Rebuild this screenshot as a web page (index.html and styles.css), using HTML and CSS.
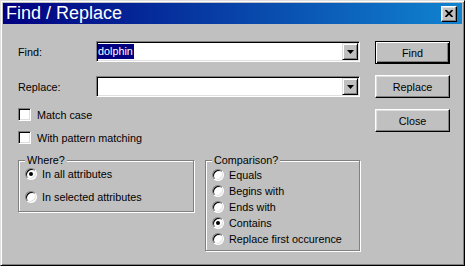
FILE: index.html
```html
<!DOCTYPE html>
<html lang="en">
<head>
    <meta charset="UTF-8">
    <title>Find / Replace</title>
    <link rel="stylesheet" href="styles.css">
</head>
<body>
    <div class="window">
        <div class="titlebar">
            <span class="title">Find / Replace</span>
            <button class="close-btn" aria-label="Close">
                <svg width="8" height="7" viewBox="0 0 8 7"><path d="M0.5 0 L7.5 7 M7.5 0 L0.5 7" stroke="#000" stroke-width="1.8" fill="none"/></svg>
            </button>
        </div>

        <div class="content">
            <div class="form-area">
                <div class="field-row">
                    <span class="field-label">Find:</span>
                    <div class="combo">
                        <div class="combo-text"><span class="selected">dolphin</span></div>
                        <span class="combo-arrow"><svg width="7" height="4" viewBox="0 0 7 4"><path d="M0 0 H7 L3.5 4 Z" fill="#000"/></svg></span>
                    </div>
                </div>
                <div class="field-row second">
                    <span class="field-label">Replace:</span>
                    <div class="combo">
                        <div class="combo-text"></div>
                        <span class="combo-arrow"><svg width="7" height="4" viewBox="0 0 7 4"><path d="M0 0 H7 L3.5 4 Z" fill="#000"/></svg></span>
                    </div>
                </div>

                <div class="check-row first">
                    <span class="checkbox"></span>Match case
                </div>
                <div class="check-row">
                    <span class="checkbox"></span>With pattern matching
                </div>

                <div class="groups">
                    <fieldset class="group where">
                        <legend>Where?</legend>
                        <div class="radio-row"><span class="radio checked"></span>In all attributes</div>
                        <div class="radio-row"><span class="radio"></span>In selected attributes</div>
                    </fieldset>
                    <fieldset class="group comparison">
                        <legend>Comparison?</legend>
                        <div class="radio-row"><span class="radio"></span>Equals</div>
                        <div class="radio-row"><span class="radio"></span>Begins with</div>
                        <div class="radio-row"><span class="radio"></span>Ends with</div>
                        <div class="radio-row"><span class="radio checked"></span>Contains</div>
                        <div class="radio-row"><span class="radio"></span>Replace first occurence</div>
                    </fieldset>
                </div>
            </div>

            <div class="buttons">
                <button class="btn default">Find</button>
                <button class="btn">Replace</button>
                <button class="btn">Close</button>
            </div>
        </div>
    </div>
</body>
</html>
```

FILE: styles.css
```css
body {
    margin: 0;
    padding: 0;
    background-color: #c0c0c0;
    font-family: 'Liberation Sans', Arial, sans-serif;
    font-size: 10.8px;
    color: #000;
}

.window {
    width: 465px;
    height: 266px;
    box-sizing: border-box;
    background-color: #c0c0c0;
    border: 1px solid;
    border-color: #dfdfdf #000 #000 #dfdfdf;
    box-shadow: inset 1px 1px #fff, inset -1px -1px #808080;
    padding: 2px;
    display: flex;
    flex-direction: column;
}

.titlebar {
    height: 21px;
    display: flex;
    align-items: center;
    justify-content: space-between;
    padding: 0 5px 0 3px;
    background: linear-gradient(to right, #000080, #1084d0);
    color: #fff;
}

.title {
    font-size: 18px;
    line-height: 21px;
}

.close-btn {
    width: 16px;
    height: 16px;
    padding: 0 1px 0 0;
    box-sizing: border-box;
    display: flex;
    align-items: center;
    justify-content: center;
    background-color: #c0c0c0;
    border: 1px solid;
    border-color: #fff #000 #000 #fff;
    box-shadow: inset -1px -1px #808080, inset 1px 1px #dfdfdf;
}

.content {
    display: grid;
    grid-template-columns: 342px 75px;
    column-gap: 15px;
    align-items: start;
    padding: 17px 0 0 15px;
}

.form-area {
    display: flex;
    flex-direction: column;
}

.field-row {
    display: flex;
    align-items: center;
    height: 21px;
}

.field-row.second {
    margin-top: 14px;
}

.field-label {
    width: 78px;
}

.combo {
    width: 264px;
    height: 21px;
    box-sizing: border-box;
    display: flex;
    padding: 1px;
    background-color: #fff;
    border: 1px solid;
    border-color: #808080 #fff #fff #808080;
    box-shadow: inset 1px 1px #000, inset -1px -1px #dfdfdf;
}

.combo-text {
    flex: 1;
    display: flex;
    align-items: center;
}

.selected {
    background-color: #000080;
    color: #fff;
    line-height: 15px;
    padding-right: 1px;
}

.combo-arrow {
    width: 16px;
    box-sizing: border-box;
    display: flex;
    align-items: center;
    justify-content: center;
    background-color: #c0c0c0;
    border: 1px solid;
    border-color: #dfdfdf #000 #000 #dfdfdf;
    box-shadow: inset 1px 1px #fff, inset -1px -1px #808080;
}

.check-row {
    display: flex;
    align-items: center;
    gap: 6px;
    height: 13px;
    margin-top: 10px;
}

.check-row.first {
    margin-top: 11px;
}

.checkbox {
    width: 13px;
    height: 13px;
    box-sizing: border-box;
    background-color: #fff;
    border: 1px solid;
    border-color: #808080 #fff #fff #808080;
    box-shadow: inset 1px 1px #000, inset -1px -1px #dfdfdf;
}

.groups {
    display: flex;
    align-items: flex-start;
    gap: 11px;
    margin-top: 10px;
}

.group {
    margin: 0;
    min-width: 0;
    box-sizing: border-box;
    border: 1px solid #808080;
    box-shadow: inset 1px 1px #fff, 1px 1px #fff;
    padding: 0 0 6px 6px;
}

.group legend {
    padding: 0 2px;
    line-height: 12px;
    background-color: #c0c0c0;
}

.where {
    width: 176px;
}

.where .radio-row + .radio-row {
    margin-top: 7px;
}

.comparison {
    width: 155px;
    padding-top: 1px;
    padding-bottom: 3px;
}

.radio-row {
    display: flex;
    align-items: center;
    gap: 5px;
    height: 16px;
}

.radio {
    position: relative;
    width: 12px;
    height: 12px;
    box-sizing: border-box;
    border-radius: 50%;
    background-color: #fff;
    border: 1px solid;
    border-color: #808080 #fff #fff #808080;
    box-shadow: inset 1px 1px #000, inset -1px -1px #dfdfdf;
}

.radio.checked::after {
    content: '';
    position: absolute;
    left: 3px;
    top: 3px;
    width: 4px;
    height: 4px;
    border-radius: 50%;
    background-color: #000;
}

.buttons {
    display: flex;
    flex-direction: column;
    gap: 11px;
}

.btn {
    width: 75px;
    height: 23px;
    box-sizing: border-box;
    font-family: inherit;
    font-size: 10.8px;
    color: #000;
    background-color: #c0c0c0;
    border: 1px solid;
    border-color: #fff #000 #000 #fff;
    box-shadow: inset -1px -1px #808080, inset 1px 1px #dfdfdf;
    padding: 0;
}

.btn.default {
    border-color: #000;
    box-shadow: inset 1px 1px #fff, inset -1px -1px #000, inset -2px -2px #808080;
}
```
